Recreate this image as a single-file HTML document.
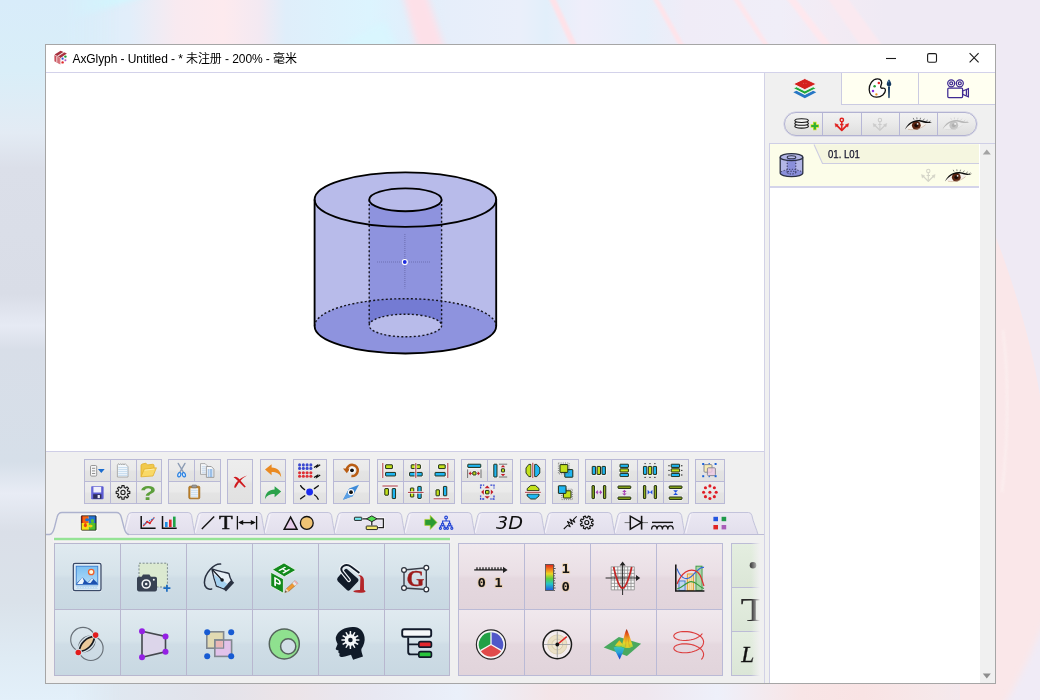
<!DOCTYPE html>
<html lang="zh">
<head>
<meta charset="utf-8">
<title>AxGlyph - Untitled</title>
<style>
*{box-sizing:border-box;margin:0;padding:0}
html,body{width:1040px;height:700px;overflow:hidden}
body{position:relative;font-family:"Liberation Sans","Noto Sans CJK SC",sans-serif;background:#e9e9f3}
.abs{position:absolute}
#bg{position:absolute;left:0;top:0;width:1040px;height:700px}
#win{position:absolute;left:45px;top:44px;width:951px;height:640px;background:#fff;border:1px solid #a6a6a6}
#title{position:absolute;left:0;top:0;width:949px;height:28px;background:#fff;border-bottom:1px solid #d3d2ea}
#title .txt{position:absolute;left:26.5px;top:5.5px;font-size:12px;line-height:16px;color:#000;white-space:nowrap;letter-spacing:-0.08px}
#canvas{position:absolute;left:0;top:28px;width:718px;height:379px;background:#fff;border-bottom:1px solid #cfcee6}
#vsep{position:absolute;left:718px;top:28px;width:1px;height:610px;background:#d2d2e6}
#bottom{position:absolute;left:0;top:407px;width:718px;height:231px;background:#f0f0f0;overflow:hidden}
#right{position:absolute;left:719px;top:28px;width:230px;height:610px;background:#f0f0f0;overflow:hidden}
.grp{position:absolute;top:7px;height:45px;background:#b9b9d6}
.grp b{position:absolute;display:block;background:linear-gradient(#ededed,#eaeaea 46%,#e4e4e4 54%,#e1e1e1)}
.tab{position:absolute;top:60px;height:23px}
.pal{position:absolute;top:91px;height:133px}
.pal b{position:absolute;display:block}
#pblue{left:8px;width:396px;background:#b8b7cf}
#pblue b{background:linear-gradient(#e0eaf0,#d6e3ea 47%,#cfdde6 53%,#c8d8e2)}
#ppink{left:412px;width:265px;background:#babad6}
#ppink b{background:linear-gradient(#f0e8ed,#eadfe5 47%,#e5d8df 53%,#e1d4db)}
#pgreen{left:685px;width:34px;background:#bcbcd6}
#pgreen b{background:linear-gradient(#e4eee0,#dbe6d7)}
#ico{position:absolute;left:0;top:0;width:1040px;height:700px;pointer-events:none}
#rtabs b{position:absolute;display:block;top:0;height:32px;background:#fffff1;border-bottom:1px solid #cbcbe2;border-left:1px solid #cbcbe2}
#pill{position:absolute;left:19px;top:39px;width:193px;height:24px;border:1px solid #b2b2d2;box-shadow:0 0 0 .5px #c9c9e0;border-radius:12px;background:linear-gradient(#f2f2f2,#e9e9e9 50%,#dedede);overflow:hidden}
#pill i{position:absolute;top:0;width:1px;height:22px;background:#b7b7d6}
#list{position:absolute;left:4px;top:70px;width:226px;height:540px;border-top:1px solid #cfcfe6;border-left:1px solid #cfcfe6;background:#fff}
#item{position:absolute;left:0;top:0;width:209px;height:44px;background:#fcfde9;border-bottom:2px solid #d4d4ea}
#item .lbl{position:absolute;left:58px;top:3px;font-size:11px;line-height:14px;color:#12122a;-webkit-text-stroke:.25px #12122a;white-space:nowrap;transform:scaleX(.87);transform-origin:0 0}
#sb{position:absolute;left:210px;top:0;width:16px;height:540px;background:#f0f0f0}
</style>
</head>
<body>
<svg id="bg" viewBox="0 0 1040 700">
<defs>
<linearGradient id="gTop" x1="0" y1="0" x2="1040" y2="0" gradientUnits="userSpaceOnUse">
<stop offset="0" stop-color="#d8ecfa"/><stop offset="0.05" stop-color="#d8eefa"/><stop offset="0.125" stop-color="#e2eefa"/>
<stop offset="0.17" stop-color="#f8eaf0"/><stop offset="0.215" stop-color="#fdeaee"/><stop offset="0.25" stop-color="#f3e9f2"/>
<stop offset="0.275" stop-color="#dfeefa"/><stop offset="0.355" stop-color="#dcf4fe"/><stop offset="0.385" stop-color="#e0f0fc"/>
<stop offset="0.43" stop-color="#e6eefa"/>
<stop offset="0.50" stop-color="#eaeffa"/><stop offset="0.525" stop-color="#e2effa"/><stop offset="0.56" stop-color="#efeefa"/>
<stop offset="0.62" stop-color="#e6effa"/><stop offset="0.66" stop-color="#f0ecf7"/><stop offset="0.75" stop-color="#f0eef8"/>
<stop offset="0.80" stop-color="#f3ebf4"/><stop offset="0.85" stop-color="#efeaf4"/><stop offset="1" stop-color="#efeaf4"/>
</linearGradient>
<linearGradient id="gLeft" x1="0" y1="0" x2="0" y2="700" gradientUnits="userSpaceOnUse">
<stop offset="0" stop-color="#d8ecfa"/><stop offset="0.10" stop-color="#d9eef8"/><stop offset="0.19" stop-color="#e3ebf4"/>
<stop offset="0.24" stop-color="#dbdfe9"/><stop offset="0.42" stop-color="#d9dde7"/><stop offset="0.465" stop-color="#e6eaf4"/>
<stop offset="0.50" stop-color="#d8dee8"/><stop offset="0.66" stop-color="#d6dfe9"/><stop offset="0.705" stop-color="#e8ecf5"/>
<stop offset="0.76" stop-color="#dadfe8"/><stop offset="0.86" stop-color="#dae2ea"/><stop offset="0.94" stop-color="#dfebf4"/><stop offset="1" stop-color="#e3f0fa"/>
</linearGradient>
<linearGradient id="gLeftFade" x1="0" y1="0" x2="1" y2="0"><stop offset="0" stop-color="#fff"/><stop offset="0.55" stop-color="#fff"/><stop offset="1" stop-color="#000"/></linearGradient>
<mask id="mLeft"><rect x="0" y="0" width="120" height="700" fill="url(#gLeftFade)"/></mask>
<linearGradient id="gBot" x1="0" y1="0" x2="1040" y2="0" gradientUnits="userSpaceOnUse">
<stop offset="0" stop-color="#e3f0fa"/><stop offset="0.09" stop-color="#dfe9f2"/><stop offset="0.2" stop-color="#e2e3eb"/>
<stop offset="0.28" stop-color="#ece4e8"/><stop offset="0.36" stop-color="#e8e8f2"/><stop offset="0.44" stop-color="#eaf0fa"/>
<stop offset="0.53" stop-color="#f4e5e8"/><stop offset="0.62" stop-color="#efe7ef"/><stop offset="0.69" stop-color="#eef0fa"/>
<stop offset="0.77" stop-color="#f8e5e6"/><stop offset="0.83" stop-color="#f9e3e4"/><stop offset="0.90" stop-color="#f6e8ea"/>
<stop offset="0.96" stop-color="#f1e9f3"/><stop offset="1" stop-color="#f0eaf6"/>
</linearGradient>
<filter id="bl3" x="-20%" y="-20%" width="140%" height="140%"><feGaussianBlur stdDeviation="3"/></filter><filter id="bl1" x="-20%" y="-20%" width="140%" height="140%"><feGaussianBlur stdDeviation="1.300"/></filter>
</defs>
<rect x="0" y="0" width="1040" height="700" fill="url(#gTop)"/>
<g filter="url(#bl3)"><path d="M20 50 L70 20 L150 -6 L60 -6 L10 30Z" fill="#d0f7fe" opacity=".9"/><path d="M402 -8 L426 -8 L446 52 L418 52Z" fill="#fde0e8"/><path d="M330 52 L385 20 L400 52Z" fill="#d8f6fe" opacity=".8"/></g>
<g stroke-linecap="butt" fill="none" filter="url(#bl1)">
<path d="M551 -4 L575 48" stroke="#fee2e8" stroke-width="6"/>
<path d="M654 -4 L683 48" stroke="#fee4ea" stroke-width="5"/>
<path d="M734 -4 L768 48" stroke="#fee6ec" stroke-width="5"/>
<path d="M789 -4 L829 48" stroke="#fee8ee" stroke-width="7"/>
<path d="M826 -4 L862 48 L884 48 L846 -4Z" fill="#fae9f0" stroke="none"/>
</g>
<rect x="0" y="660" width="1040" height="40" fill="url(#gBot)"/>
<rect x="0" y="0" width="120" height="700" fill="url(#gLeft)" mask="url(#mLeft)"/>
<rect x="960" y="60" width="80" height="640" fill="#efeaf4"/>
<path d="M990 222 C1006 262 1030 330 1041 402 L1041 701 L960 701 L960 222Z" fill="#fae7e9"/>
<path d="M1003 330 C1009 380 1008 440 1002 492" stroke="#fcf0f0" stroke-width="2.500" fill="none" opacity=".8" filter="url(#bl1)"/>
<path d="M1046 618 C1034 648 1020 678 1004 706 L1046 706Z" fill="#f0ebf6" filter="url(#bl3)"/>

</svg>
<div id="win">
  <div id="title">
<svg class="abs" style="left:0;top:0" width="40" height="28" viewBox="46 45 40 28">
<path d="M54.6 54.6 L60.6 50.8 L66.9 53.6 L60.6 58Z" fill="#a8323f"/>
<path d="M57.100 56L63.250 52 64.250 52.450 58.100 56.600Z" fill="#f6eaea"/>
<path d="M54.4 55 L60.4 58.2 L60.4 64.6 L54.4 61.2Z" fill="#c8505c"/>
<path d="M56.3 56.2 L57.4 56.8 L57.4 62.9 L56.3 62.3Z" fill="#f4dede"/>
<path d="M58.6 57.4 L59.5 57.9 L59.5 64 L58.6 63.5Z" fill="#e9a0a4"/>
<path d="M60.8 58.2 L66.9 54.2 L66.9 60.6 L60.8 64.6Z" fill="#fbf6f6"/>
<circle cx="62.6" cy="58.7" r="1.1" fill="#2a55d8"/><circle cx="65.4" cy="56.6" r="1.2" fill="#1fa03a"/>
<circle cx="62.6" cy="62.4" r="1.2" fill="#e02626"/><circle cx="65.4" cy="60.2" r="1" fill="#a855c8"/>
</svg>

    <div class="txt">AxGlyph - Untitled - * 未注册 - 200% - 毫米</div>
<svg class="abs" style="left:820px;top:0" width="129" height="28" viewBox="866 45 129 28" fill="none" stroke="#1a1a1a" stroke-width="1.1">
<path d="M886 58.5 H896"/>
<rect x="927.6" y="53.6" width="8.9" height="8.6" rx="1.5"/>
<path d="M969.6 53.2 L978.6 62.4 M978.6 53.2 L969.6 62.4"/>
</svg>

  </div>
  <div id="canvas">
<svg class="abs" style="left:0;top:0" width="718" height="378" viewBox="46 73 718 378">
<defs><clipPath id="cpBot"><ellipse cx="405.4" cy="326.1" rx="90.8" ry="27.4"/></clipPath></defs>
<path d="M314.6 199.6 A90.8 27.3 0 0 1 496.2 199.6 L496.2 326.1 A90.8 27.4 0 0 1 314.6 326.1Z" fill="#b8bbea"/>
<ellipse cx="405.4" cy="326.1" rx="90.8" ry="27.4" fill="#8e93de"/>
<path id="innerCyl" d="M369.2 199.8 A36.2 11.4 0 0 0 441.6 199.8 L441.6 325.5 A36.2 11.3 0 0 1 369.2 325.5Z" fill="#8e93de"/>
<path d="M369.2 199.8 L441.6 199.8 L441.6 325.5 A36.2 11.3 0 0 1 369.2 325.5Z" fill="#747bd3" clip-path="url(#cpBot)"/>
<ellipse cx="405.4" cy="325.5" rx="36.2" ry="11.3" fill="#b8bbea"/>
<ellipse cx="405.4" cy="199.8" rx="36.2" ry="11.4" fill="#b8bbea"/>
<g fill="none" stroke="#14141c" stroke-width="1.4" stroke-dasharray="2 2.2">
<path d="M314.6 326.1 A90.8 27.4 0 0 1 496.2 326.1"/>
<ellipse cx="405.4" cy="325.5" rx="36.2" ry="11.3"/>
<path d="M369.2 199.8 V325.5 M441.6 199.8 V325.5"/>
</g>
<g fill="none" stroke="#000" stroke-width="1.85">
<path d="M314.6 199.6 L314.6 326.1 A90.8 27.4 0 0 0 496.2 326.1 L496.2 199.6"/>
<ellipse cx="405.4" cy="199.6" rx="90.8" ry="27.3"/>
<ellipse cx="405.4" cy="199.8" rx="36.2" ry="11.4"/>
</g>
<g stroke="#7174b8" stroke-width="1.6" stroke-dasharray="1 1" opacity=".75">
<path d="M377 262 H431 M404.8 234 V288.5"/>
</g>
<circle cx="404.8" cy="262" r="3.1" fill="#fff"/>
<circle cx="404.8" cy="262" r="1.9" fill="#1d2be0"/>
</svg>
  </div>
  <div id="vsep"></div>
  <div id="bottom">
<div class="grp" style="left:38px;width:78px"><b style="left:1px;top:1px;width:25px;height:21px"></b><b style="left:1px;top:23px;width:25px;height:21px"></b><b style="left:27px;top:1px;width:25px;height:21px"></b><b style="left:27px;top:23px;width:25px;height:21px"></b><b style="left:53px;top:1px;width:24px;height:21px"></b><b style="left:53px;top:23px;width:24px;height:21px"></b></div>
<div class="grp" style="left:122px;width:53px"><b style="left:1px;top:1px;width:25px;height:21px"></b><b style="left:27px;top:1px;width:25px;height:21px"></b><b style="left:1px;top:23px;width:51px;height:21px"></b></div>
<div class="grp" style="left:181px;width:26px"><b style="left:1px;top:1px;width:24px;height:43px"></b></div>
<div class="grp" style="left:214px;width:26px"><b style="left:1px;top:1px;width:24px;height:21px"></b><b style="left:1px;top:23px;width:24px;height:21px"></b></div>
<div class="grp" style="left:247px;width:34px"><b style="left:1px;top:1px;width:32px;height:21px"></b><b style="left:1px;top:23px;width:32px;height:21px"></b></div>
<div class="grp" style="left:287px;width:37px"><b style="left:1px;top:1px;width:35px;height:21px"></b><b style="left:1px;top:23px;width:35px;height:21px"></b></div>
<div class="grp" style="left:331px;width:78px"><b style="left:1px;top:1px;width:25px;height:21px"></b><b style="left:1px;top:23px;width:25px;height:21px"></b><b style="left:27px;top:1px;width:25px;height:21px"></b><b style="left:27px;top:23px;width:25px;height:21px"></b><b style="left:53px;top:1px;width:24px;height:21px"></b><b style="left:53px;top:23px;width:24px;height:21px"></b></div>
<div class="grp" style="left:415px;width:52px"><b style="left:1px;top:1px;width:25px;height:21px"></b><b style="left:27px;top:1px;width:24px;height:21px"></b><b style="left:1px;top:23px;width:50px;height:21px"></b></div>
<div class="grp" style="left:474px;width:26px"><b style="left:1px;top:1px;width:24px;height:21px"></b><b style="left:1px;top:23px;width:24px;height:21px"></b></div>
<div class="grp" style="left:506px;width:27px"><b style="left:1px;top:1px;width:25px;height:21px"></b><b style="left:1px;top:23px;width:25px;height:21px"></b></div>
<div class="grp" style="left:539px;width:104px"><b style="left:1px;top:1px;width:25px;height:21px"></b><b style="left:1px;top:23px;width:25px;height:21px"></b><b style="left:27px;top:1px;width:25px;height:21px"></b><b style="left:27px;top:23px;width:25px;height:21px"></b><b style="left:53px;top:1px;width:25px;height:21px"></b><b style="left:53px;top:23px;width:25px;height:21px"></b><b style="left:79px;top:1px;width:24px;height:21px"></b><b style="left:79px;top:23px;width:24px;height:21px"></b></div>
<div class="grp" style="left:649px;width:30px"><b style="left:1px;top:1px;width:28px;height:21px"></b><b style="left:1px;top:23px;width:28px;height:21px"></b></div>
<svg class="abs" style="left:0;top:0" width="718" height="231" viewBox="46 452 718 231">
<defs><linearGradient id="tabg" x1="0" y1="0" x2="0" y2="1"><stop offset="0" stop-color="#ebe8f3"/><stop offset="1" stop-color="#e2dfec"/></linearGradient></defs>
<path d="M613 534.5 C614.6 531.5 616.8000000000001 518.5 617.7 515.7 Q618.6 512.5 621.8000000000001 512.5 H678.2 Q680.9000000000001 512.5 681.6 515.5 C682.6 521.5 683.8 529.5 685 534.5Z" fill="url(#tabg)"/>
<path d="M613 534.5 C614.6 531.5 616.8000000000001 518.5 617.7 515.7 Q618.6 512.5 621.8000000000001 512.5 H678.2 Q680.9000000000001 512.5 681.6 515.5 C682.6 521.5 683.8 529.5 685 534.5" fill="none" stroke="#c3c3db" stroke-width="1"/>
<path d="M615.2 533 L620.2 514.2" fill="none" stroke="#f6f4fa" stroke-width="1.1"/>
<path d="M543 534.5 C544.6 531.5 546.8000000000001 518.5 547.7 515.7 Q548.6 512.5 551.8000000000001 512.5 H608.2 Q610.9000000000001 512.5 611.6 515.5 C612.6 521.5 613.8 529.5 615 534.5Z" fill="url(#tabg)"/>
<path d="M543 534.5 C544.6 531.5 546.8000000000001 518.5 547.7 515.7 Q548.6 512.5 551.8000000000001 512.5 H608.2 Q610.9000000000001 512.5 611.6 515.5 C612.6 521.5 613.8 529.5 615 534.5" fill="none" stroke="#c3c3db" stroke-width="1"/>
<path d="M545.2 533 L550.2 514.2" fill="none" stroke="#f6f4fa" stroke-width="1.1"/>
<path d="M473 534.5 C474.6 531.5 476.8 518.5 477.7 515.7 Q478.59999999999997 512.5 481.8 512.5 H538.2 Q540.9000000000001 512.5 541.6 515.5 C542.6 521.5 543.8 529.5 545 534.5Z" fill="url(#tabg)"/>
<path d="M473 534.5 C474.6 531.5 476.8 518.5 477.7 515.7 Q478.59999999999997 512.5 481.8 512.5 H538.2 Q540.9000000000001 512.5 541.6 515.5 C542.6 521.5 543.8 529.5 545 534.5" fill="none" stroke="#c3c3db" stroke-width="1"/>
<path d="M475.2 533 L480.2 514.2" fill="none" stroke="#f6f4fa" stroke-width="1.1"/>
<path d="M403 534.5 C404.6 531.5 406.8 518.5 407.7 515.7 Q408.59999999999997 512.5 411.8 512.5 H468.2 Q470.9 512.5 471.59999999999997 515.5 C472.59999999999997 521.5 473.8 529.5 475 534.5Z" fill="url(#tabg)"/>
<path d="M403 534.5 C404.6 531.5 406.8 518.5 407.7 515.7 Q408.59999999999997 512.5 411.8 512.5 H468.2 Q470.9 512.5 471.59999999999997 515.5 C472.59999999999997 521.5 473.8 529.5 475 534.5" fill="none" stroke="#c3c3db" stroke-width="1"/>
<path d="M405.2 533 L410.2 514.2" fill="none" stroke="#f6f4fa" stroke-width="1.1"/>
<path d="M333 534.5 C334.6 531.5 336.8 518.5 337.7 515.7 Q338.59999999999997 512.5 341.8 512.5 H398.2 Q400.9 512.5 401.59999999999997 515.5 C402.59999999999997 521.5 403.8 529.5 405 534.5Z" fill="url(#tabg)"/>
<path d="M333 534.5 C334.6 531.5 336.8 518.5 337.7 515.7 Q338.59999999999997 512.5 341.8 512.5 H398.2 Q400.9 512.5 401.59999999999997 515.5 C402.59999999999997 521.5 403.8 529.5 405 534.5" fill="none" stroke="#c3c3db" stroke-width="1"/>
<path d="M335.2 533 L340.2 514.2" fill="none" stroke="#f6f4fa" stroke-width="1.1"/>
<path d="M263 534.5 C264.6 531.5 266.8 518.5 267.7 515.7 Q268.59999999999997 512.5 271.8 512.5 H328.2 Q330.9 512.5 331.59999999999997 515.5 C332.59999999999997 521.5 333.8 529.5 335 534.5Z" fill="url(#tabg)"/>
<path d="M263 534.5 C264.6 531.5 266.8 518.5 267.7 515.7 Q268.59999999999997 512.5 271.8 512.5 H328.2 Q330.9 512.5 331.59999999999997 515.5 C332.59999999999997 521.5 333.8 529.5 335 534.5" fill="none" stroke="#c3c3db" stroke-width="1"/>
<path d="M265.2 533 L270.2 514.2" fill="none" stroke="#f6f4fa" stroke-width="1.1"/>
<path d="M193 534.5 C194.6 531.5 196.79999999999998 518.5 197.7 515.7 Q198.6 512.5 201.79999999999998 512.5 H258.2 Q260.9 512.5 261.59999999999997 515.5 C262.59999999999997 521.5 263.8 529.5 265 534.5Z" fill="url(#tabg)"/>
<path d="M193 534.5 C194.6 531.5 196.79999999999998 518.5 197.7 515.7 Q198.6 512.5 201.79999999999998 512.5 H258.2 Q260.9 512.5 261.59999999999997 515.5 C262.59999999999997 521.5 263.8 529.5 265 534.5" fill="none" stroke="#c3c3db" stroke-width="1"/>
<path d="M195.2 533 L200.2 514.2" fill="none" stroke="#f6f4fa" stroke-width="1.1"/>
<path d="M123 534.5 C124.6 531.5 126.79999999999998 518.5 127.69999999999999 515.7 Q128.6 512.5 131.79999999999998 512.5 H188.2 Q190.89999999999998 512.5 191.6 515.5 C192.6 521.5 193.8 529.5 195 534.5Z" fill="url(#tabg)"/>
<path d="M123 534.5 C124.6 531.5 126.79999999999998 518.5 127.69999999999999 515.7 Q128.6 512.5 131.79999999999998 512.5 H188.2 Q190.89999999999998 512.5 191.6 515.5 C192.6 521.5 193.8 529.5 195 534.5" fill="none" stroke="#c3c3db" stroke-width="1"/>
<path d="M125.2 533 L130.2 514.2" fill="none" stroke="#f6f4fa" stroke-width="1.1"/>
<path d="M683.5 534.5 C685.1 531.5 687.6 518.5 688.5 515.7 Q689.4 512.5 692.6 512.5 H748.5 Q751.2 512.5 751.9 515.5 C752.9 521.5 756.8 529.5 758.0 534.5Z" fill="url(#tabg)"/><path d="M683.5 534.5 C685.1 531.5 687.6 518.5 688.5 515.7 Q689.4 512.5 692.6 512.5 H748.5 Q751.2 512.5 751.9 515.5 C752.9 521.5 756.8 529.5 758.0 534.5" fill="none" stroke="#c3c3db" stroke-width="1"/>
<path d="M685.7 533 L690.7 514.2" fill="none" stroke="#f6f4fa" stroke-width="1.1"/>
<path d="M46 534.500 H764" stroke="#bcbcd6" stroke-width="1.200"/>
<path d="M46 534.5 H49.5 C52.5 534.5 53.6 531 54.6 527 L57 517.5 C57.8 514 58.8 512.5 62 512.5 H116.5 C119.6 512.5 120.5 514 121.4 517.5 L124 527.5 C125 531.5 126 534.5 129 534.5 L129 536 L46 536Z" fill="#f0f0f0"/>
<path d="M46 534.5 H49.5 C52.5 534.5 53.6 531 54.6 527 L57 517.5 C57.8 514 58.8 512.5 62 512.5 H116.5 C119.6 512.5 120.5 514 121.4 517.5 L124 527.5 C125 531.5 126 534.5 129 534.5" fill="none" stroke="#adb2ce" stroke-width="1.350"/>
<path d="M53 536.500 H450.500 V541.800 H53Z" fill="#f7f1f8"/><path d="M54 537.700 H450 V540.300 H54Z" fill="#95e395"/>
</svg>
<div class="pal" id="pblue"><b style="left:1px;top:1px;width:65px;height:65px"></b><b style="left:67px;top:1px;width:65px;height:65px"></b><b style="left:133px;top:1px;width:65px;height:65px"></b><b style="left:199px;top:1px;width:65px;height:65px"></b><b style="left:265px;top:1px;width:65px;height:65px"></b><b style="left:331px;top:1px;width:64px;height:65px"></b><b style="left:1px;top:67px;width:65px;height:65px"></b><b style="left:67px;top:67px;width:65px;height:65px"></b><b style="left:133px;top:67px;width:65px;height:65px"></b><b style="left:199px;top:67px;width:65px;height:65px"></b><b style="left:265px;top:67px;width:65px;height:65px"></b><b style="left:331px;top:67px;width:64px;height:65px"></b></div>
<div class="pal" id="ppink"><b style="left:1px;top:1px;width:65px;height:65px"></b><b style="left:67px;top:1px;width:65px;height:65px"></b><b style="left:133px;top:1px;width:65px;height:65px"></b><b style="left:199px;top:1px;width:65px;height:65px"></b><b style="left:1px;top:67px;width:65px;height:65px"></b><b style="left:67px;top:67px;width:65px;height:65px"></b><b style="left:133px;top:67px;width:65px;height:65px"></b><b style="left:199px;top:67px;width:65px;height:65px"></b></div>
<div class="pal" id="pgreen"><b style="left:1px;top:1px;width:33px;height:43px"></b><b style="left:1px;top:45px;width:33px;height:43px"></b><b style="left:1px;top:89px;width:33px;height:43px"></b></div>
  </div>
  <div id="right">
<div id="rtabs"><b style="left:76px;width:77px"></b><b style="left:153px;width:77px"></b></div>
<div id="pill"><i style="left:37px"></i><i style="left:76px"></i><i style="left:114px"></i><i style="left:152px"></i></div>
<div id="list">
  <div id="item">
    <svg class="abs" style="left:0;top:0" width="209" height="43" viewBox="770 143.500 209 43">
      <defs><pattern id="dots" width="2" height="2" patternUnits="userSpaceOnUse"><rect width="2" height="2" fill="#f8f9e4"/><rect width="1" height="1" fill="#f1f2dc"/><rect x="1" y="1" width="1" height="1" fill="#f1f2dc"/></pattern></defs>
      <path d="M814 144 L822.500 163 H979 V144Z" fill="url(#dots)"/>
      <path d="M814 144 L822.500 163 H979" fill="none" stroke="#cdcde2" stroke-width="1.100"/>
    </svg>
    <div class="lbl">01. L01</div>
  </div>
  <div id="sb"></div>
</div>

  </div>
</div>
<svg id="ico" viewBox="0 0 1040 700">
<g id="tb-menu"><rect x="90.5" y="465.5" width="6.2" height="10.6" rx="1.2" fill="#f6f6f6" stroke="#8c8c8c" stroke-width=".9"/><path d="M92 468.3h3.2M92 470.9h3.2M92 473.5h3.2" stroke="#909090" stroke-width="1"/><path d="M97.9 468.9h6.8l-3.4 4.2z" fill="#1b6ccf"/></g>
<g id="tb-new"><path d="M117.4 465.2l1.1-1.6 1.1 1.4 1.1-1.4 1.1 1.4 1.1-1.4 1.1 1.4 1.1-1.4 1.2 1.2 1.7 1.9V477H117.4Z" fill="#f3f8fc" stroke="#9b9b9b" stroke-width=".8"/><path d="M118.3 467.6h9.8M118.3 469.6h9.8M118.3 471.6h9.8M118.3 473.6h9.8M118.3 475.4h9.8" stroke="#b9d3ea" stroke-width=".8"/></g>
<g id="tb-open"><path d="M141 476.6V465.6q0-1.3 1.3-1.6l3.6-.8 1.6 1.7 5.2-.6q1.2 0 1.3 1.2l.2 3.2" fill="#f1c94c" stroke="#e0ae28" stroke-width=".8"/><path d="M141 476.8l3.2-7.6 12.2-1.4-3.4 8.2Z" fill="#f9d966" stroke="#e2b02c" stroke-width=".8"/><path d="M144.6 470.2l9.5-1.1" stroke="#fdeea8" stroke-width="1"/></g>
<g id="tb-save"><rect x="91" y="486.2" width="12.6" height="13" rx="1.2" fill="#5b5bd2"/><rect x="93.4" y="486.9" width="7.8" height="5.6" fill="#f1f1fb"/><rect x="93.2" y="494.2" width="8.2" height="4.6" fill="#2e2e5e"/><rect x="97.6" y="495" width="2.3" height="3.1" fill="#ececfa"/><path d="M91.8 487v11.4" stroke="#8a8ae6" stroke-width="1"/></g>
<g id="tb-gear" fill="none" stroke="#1c1c1c" stroke-width="1.100" stroke-linejoin="round"><path d="M127.85 491.19 L129.81 491.27 L129.81 493.53 L127.85 493.61 L127.28 494.98 L128.61 496.41 L127.01 498.01 L125.58 496.68 L124.21 497.25 L124.13 499.21 L121.87 499.21 L121.79 497.25 L120.42 496.68 L118.99 498.01 L117.39 496.41 L118.72 494.98 L118.15 493.61 L116.19 493.53 L116.19 491.27 L118.15 491.19 L118.72 489.82 L117.39 488.39 L118.99 486.79 L120.42 488.12 L121.79 487.55 L121.87 485.59 L124.13 485.59 L124.21 487.55 L125.58 488.12 L127.01 486.79 L128.61 488.39 L127.28 489.82Z"/><circle cx="123" cy="492.400" r="2.100"/></g>
<text id="tb-help" x="148.2" y="499.9" font-family="Liberation Sans,sans-serif" font-weight="700" font-size="20.5" fill="#5c9f3b" text-anchor="middle" transform="translate(148.2 0) scale(1.3 1) translate(-148.2 0)">?</text>
<g id="tb-cut"><path d="M178.2 463.4L183.9 473.2M185 463.4L179.3 473.2" stroke="#8c9cb4" stroke-width="1.350" stroke-linecap="round"/><ellipse cx="179.3" cy="474.7" rx="1.450" ry="2.200" fill="#e6f2ff" stroke="#2a82e2" stroke-width="1.250" transform="rotate(18 179.3 474.7)"/><ellipse cx="183.9" cy="474.7" rx="1.450" ry="2.200" fill="#e6f2ff" stroke="#2a82e2" stroke-width="1.250" transform="rotate(-18 183.9 474.7)"/></g>
<g id="tb-copy"><path d="M200.5 463.6h4.6l2.2 2.2v8.6h-6.8z" fill="#f4f6f8" stroke="#9a9a9a" stroke-width=".8"/><path d="M201.8 466.8h4M201.8 468.8h4M201.8 470.8h4M201.8 472.8h4" stroke="#b5cde6" stroke-width=".8"/><path d="M206.4 466.5h4.9l2.6 2.6v8.3h-7.5z" fill="#f6f8fa" stroke="#8a8a8a" stroke-width=".8"/><path d="M207.8 470h4.6M207.8 472h4.6M207.8 474h4.6M207.8 476h4.6" stroke="#2c7ad0" stroke-width=".9" stroke-dasharray="1 .8 3 0"/></g>
<g id="tb-paste"><rect x="188.8" y="486.2" width="11" height="12.6" rx="1.2" fill="#c08328" stroke="#9c651a" stroke-width=".7"/><rect x="190.4" y="488.2" width="7.8" height="9.4" fill="#f0f6fb"/><path d="M190.8 490.4h7M190.8 492.4h7M190.8 494.4h7M190.8 496.2h7" stroke="#c2d8ea" stroke-width=".8"/><rect x="191.8" y="485" width="5" height="2.8" rx="1" fill="#9a9a9a" stroke="#6e6e6e" stroke-width=".6"/></g>
<g id="tb-del" fill="#d01a1e"><path d="M233.500 477.300Q236.200 476 238.700 478.500L245.800 486.700 244.500 487.600 237.200 480.300Q235.200 478.300 233.500 477.300Z"/><path d="M247 475.500Q240.200 479.200 236.600 486.300 235.400 488.400 234.500 487.800 233.600 486.200 236.400 482.500 240.400 477.700 247 475.500Z"/></g>
<path id="tb-undo" d="M265 469.6l6.6-5.4v3.4c5.8.2 9.3 3.4 9.6 9.6-1.8-3.6-4.6-5.2-9.6-5.2v3.2z" fill="#ea8a22"/>
<path id="tb-redo" d="M281.2 491.6l-6.6-5.4v3.4c-5.8.2-9.3 3.4-9.6 9.6 1.8-3.6 4.6-5.2 9.6-5.2v3.2z" fill="#2ba24a"/>
<g id="tb-array"><circle cx="299.60" cy="464.90" r="1.55" fill="#3b49cf"/><circle cx="299.60" cy="472.80" r="1.55" fill="#de2f35"/><circle cx="303.35" cy="464.90" r="1.55" fill="#3b49cf"/><circle cx="303.35" cy="472.80" r="1.55" fill="#de2f35"/><circle cx="307.10" cy="464.90" r="1.55" fill="#3b49cf"/><circle cx="307.10" cy="472.80" r="1.55" fill="#de2f35"/><circle cx="310.85" cy="464.90" r="1.55" fill="#3b49cf"/><circle cx="310.85" cy="472.80" r="1.55" fill="#de2f35"/><circle cx="299.60" cy="468.40" r="1.55" fill="#3b49cf"/><circle cx="299.60" cy="476.30" r="1.55" fill="#de2f35"/><circle cx="303.35" cy="468.40" r="1.55" fill="#3b49cf"/><circle cx="303.35" cy="476.30" r="1.55" fill="#de2f35"/><circle cx="307.10" cy="468.40" r="1.55" fill="#3b49cf"/><circle cx="307.10" cy="476.30" r="1.55" fill="#de2f35"/><circle cx="310.85" cy="468.40" r="1.55" fill="#3b49cf"/><circle cx="310.85" cy="476.30" r="1.55" fill="#de2f35"/><path d="M314 467.4l3.4-2.2-.6 1.8 3.4-2.2M314 477.6l3.4-2.2-.6 1.8 3.4-2.2" fill="none" stroke="#111" stroke-width="1.2"/></g>
<g id="tb-explode"><path d="M300.6 485.6Q302 488.2 304.6 489.6M318.4 485.8L314.4 488.6M300.6 498.8L304.8 495.8M318.2 499.2Q317 496.4 314.6 495" fill="none" stroke="#111" stroke-width="1.35" stroke-linecap="round"/><circle cx="309.6" cy="492" r="3.4" fill="#1d2df0"/></g>
<g id="tb-rot"><path d="M346.6 469.6A5.6 5.6 0 1 1 351.4 476" fill="none" stroke="#b95d14" stroke-width="2.5"/><path d="M343 468.4h7.2l-3.4 4.8z" fill="#b95d14"/><circle cx="352" cy="470.3" r="3" fill="#fff"/><circle cx="352" cy="470.3" r="1.9" fill="#111"/></g>
<g id="tb-compass"><path d="M343 499.8L349.2 488.4 359 484.8 352.6 496.2Z" fill="#3d8ad8"/><path d="M343 499.8L349.2 488.4 352.6 496.2Z" fill="#5a9fe4"/><circle cx="351" cy="492.2" r="3.1" fill="#fff"/><circle cx="351" cy="492.2" r="1.9" fill="#111"/></g>
<g id="tb-al"><path d="M382.8 463V478" stroke="#fff" stroke-width="2.6" opacity=".8"/><path d="M382.8 463V478" stroke="#b0404a" stroke-width="1.1"/><rect x="384.6" y="463.8" width="8.8" height="5.8" rx="1.5" fill="#fff" opacity=".9"/><rect x="385.6" y="464.8" width="6.8" height="3.8" rx="0.35" fill="#c3e11c" stroke="#1c2a14" stroke-width="1"/><rect x="384.6" y="471.4" width="12.0" height="5.6" rx="1.5" fill="#fff" opacity=".9"/><rect x="385.6" y="472.4" width="10.0" height="3.6" rx="0.35" fill="#1fb6f2" stroke="#1c2a14" stroke-width="1"/></g>
<g id="tb-ac"><rect x="410.2" y="463.8" width="11.2" height="5.8" rx="1.5" fill="#fff" opacity=".9"/><rect x="411.2" y="464.8" width="9.2" height="3.8" rx="0.35" fill="#c3e11c" stroke="#1c2a14" stroke-width="1"/><rect x="408.6" y="471.4" width="14.6" height="5.6" rx="1.5" fill="#fff" opacity=".9"/><rect x="409.6" y="472.4" width="12.6" height="3.6" rx="0.35" fill="#1fb6f2" stroke="#1c2a14" stroke-width="1"/><path d="M415.8 463V478" stroke="#fff" stroke-width="2.6" opacity=".8"/><path d="M415.8 463V478" stroke="#b0404a" stroke-width="1.1"/></g>
<g id="tb-ar"><path d="M447.8 463V478" stroke="#fff" stroke-width="2.6" opacity=".8"/><path d="M447.8 463V478" stroke="#b0404a" stroke-width="1.1"/><rect x="437.6" y="463.8" width="8.6" height="5.8" rx="1.5" fill="#fff" opacity=".9"/><rect x="438.6" y="464.8" width="6.6" height="3.8" rx="0.35" fill="#c3e11c" stroke="#1c2a14" stroke-width="1"/><rect x="434.0" y="471.4" width="12.2" height="5.6" rx="1.5" fill="#fff" opacity=".9"/><rect x="435.0" y="472.4" width="10.2" height="3.6" rx="0.35" fill="#1fb6f2" stroke="#1c2a14" stroke-width="1"/></g>
<g id="tb-at"><path d="M382.4 486H397.8" stroke="#fff" stroke-width="2.6" opacity=".8"/><path d="M382.4 486H397.8" stroke="#b0404a" stroke-width="1.1"/><rect x="383.8" y="487.6" width="5.6" height="8.6" rx="1.5" fill="#fff" opacity=".9"/><rect x="384.8" y="488.6" width="3.6" height="6.6" rx="0.35" fill="#c3e11c" stroke="#1c2a14" stroke-width="1"/><rect x="391.2" y="487.6" width="5.4" height="12.0" rx="1.5" fill="#fff" opacity=".9"/><rect x="392.2" y="488.6" width="3.4" height="10.0" rx="0.35" fill="#1fb6f2" stroke="#1c2a14" stroke-width="1"/></g>
<g id="tb-am"><rect x="409.4" y="487.0" width="5.4" height="11.0" rx="1.5" fill="#fff" opacity=".9"/><rect x="410.4" y="488.0" width="3.4" height="9.0" rx="0.35" fill="#c3e11c" stroke="#1c2a14" stroke-width="1"/><rect x="416.8" y="485.4" width="5.4" height="14.0" rx="1.5" fill="#fff" opacity=".9"/><rect x="417.8" y="486.4" width="3.4" height="12.0" rx="0.35" fill="#1fb6f2" stroke="#1c2a14" stroke-width="1"/><path d="M408 492.4H423.6" stroke="#fff" stroke-width="2.6" opacity=".8"/><path d="M408 492.4H423.6" stroke="#b0404a" stroke-width="1.1"/></g>
<g id="tb-ab"><path d="M433.6 498.8H449" stroke="#fff" stroke-width="2.6" opacity=".8"/><path d="M433.6 498.8H449" stroke="#b0404a" stroke-width="1.1"/><rect x="435.0" y="488.8" width="5.4" height="8.0" rx="1.5" fill="#fff" opacity=".9"/><rect x="436.0" y="489.8" width="3.4" height="6.0" rx="0.35" fill="#c3e11c" stroke="#1c2a14" stroke-width="1"/><rect x="442.4" y="485.4" width="5.4" height="11.4" rx="1.5" fill="#fff" opacity=".9"/><rect x="443.4" y="486.4" width="3.4" height="9.4" rx="0.35" fill="#1fb6f2" stroke="#1c2a14" stroke-width="1"/></g>
<g id="tb-sw"><rect x="466.8" y="463.2" width="15.0" height="5.2" rx="1.5" fill="#fff" opacity=".9"/><rect x="467.8" y="464.2" width="13.0" height="3.2" rx="0.35" fill="#1fb6f2" stroke="#1c2a14" stroke-width="1"/><path d="M467.6 469.4v8.6M481 469.4v8.6" stroke="#555" stroke-width=".8"/><rect x="471.8" y="470.8" width="5.2" height="5.2" rx="1.5" fill="#fff" opacity=".9"/><rect x="472.8" y="471.8" width="3.2" height="3.2" rx="0.35" fill="#c3e11c" stroke="#1c2a14" stroke-width="1"/><path d="M468.6 473.4l2.2 -2.2v4.4z" fill="#c41d2a"/><path d="M480 473.4l-2.2 -2.2v4.4z" fill="#c41d2a"/><path d="M470 473.4h2M477 473.4h2" stroke="#c41d2a" stroke-width="1"/></g>
<g id="tb-sh"><rect x="492.8" y="463.2" width="5.2" height="14.8" rx="1.5" fill="#fff" opacity=".9"/><rect x="493.8" y="464.2" width="3.2" height="12.8" rx="0.35" fill="#1fb6f2" stroke="#1c2a14" stroke-width="1"/><path d="M499 464.2h8.2M499 477h8.2" stroke="#555" stroke-width=".8"/><rect x="500.4" y="467.8" width="5.2" height="5.2" rx="1.5" fill="#fff" opacity=".9"/><rect x="501.4" y="468.8" width="3.2" height="3.2" rx="0.35" fill="#c3e11c" stroke="#1c2a14" stroke-width="1"/><path d="M503 465l-2.2 2.2h4.4z" fill="#c41d2a"/><path d="M503 476.2l-2.2 -2.2h4.4z" fill="#c41d2a"/></g>
<g id="tb-ss"><path d="M480.6 488.6v-3.4h3.6M490.4 485.2h3.6v3.4M494 495.6v3.4h-3.6M484.2 499h-3.6v-3.4" fill="none" stroke="#2d3fd0" stroke-width="1.3" stroke-dasharray="2 .9"/><rect x="484.5" y="489.4" width="5.5" height="5.5" rx="1.5" fill="#fff" opacity=".9"/><rect x="485.5" y="490.4" width="3.5" height="3.5" rx="0.35" fill="#c3e11c" stroke="#1c2a14" stroke-width="1"/><path d="M481.2 492.1l2.6 -2.6v5.2z" fill="#c41d2a"/><path d="M493.4 492.1l-2.6 -2.6v5.2z" fill="#c41d2a"/><path d="M487.2 485.6l-2.6 2.6h5.2z" fill="#c41d2a"/><path d="M487.2 498.8l-2.6 -2.6h5.2z" fill="#c41d2a"/></g>
<g id="tb-fh"><path d="M531 464.4h-2.2l-2.8 3.6v5l2.8 3.6h2.2z" fill="#c3e11c" stroke="#1c2a14" stroke-width=".9" stroke-linejoin="round"/><path d="M534.6 464.4h2.2l3 3.6v5l-3 3.6h-2.2z" fill="#1fb6f2" stroke="#1c2a14" stroke-width=".9" stroke-linejoin="round"/><path d="M532.8 462.8V478" stroke="#fff" stroke-width="2.6" opacity=".8"/><path d="M532.8 462.8V478" stroke="#b0404a" stroke-width="1.1"/></g>
<g id="tb-fv"><path d="M527.2 490.6v-2l3.6-3.2h4.6l3.6 3.2v2z" fill="#c3e11c" stroke="#1c2a14" stroke-width=".9" stroke-linejoin="round"/><path d="M527.2 494v2l3.6 3h4.6l3.6-3v-2z" fill="#1fb6f2" stroke="#1c2a14" stroke-width=".9" stroke-linejoin="round"/><path d="M525 492.3H540.8" stroke="#fff" stroke-width="2.6" opacity=".8"/><path d="M525 492.3H540.8" stroke="#b0404a" stroke-width="1.1"/></g>
<g id="tb-front"><rect x="564.8" y="469.6" width="8.0" height="7.6" rx="0.35" fill="#1fb6f2" stroke="#1c2a14" stroke-width="1"/><rect x="558.4" y="463" width="10.8" height="10.8" fill="none" stroke="#666" stroke-width=".8" stroke-dasharray="1 1.2"/><rect x="560.0" y="464.6" width="7.8" height="7.8" rx="0.35" fill="#c3e11c" stroke="#1c2a14" stroke-width="1"/></g>
<g id="tb-back"><rect x="561.8" y="489.2" width="10.6" height="10.4" fill="none" stroke="#666" stroke-width=".8" stroke-dasharray="1 1.2"/><rect x="563.4" y="490.8" width="7.6" height="7.2" rx="0.35" fill="#c3e11c" stroke="#1c2a14" stroke-width="1"/><rect x="558.4" y="485.8" width="7.6" height="7.6" rx="0.35" fill="#1fb6f2" stroke="#1c2a14" stroke-width="1"/></g>
<g id="tb-dh"><rect x="591.2" y="465.4" width="15.4" height="10" rx="1.5" fill="#fff" opacity=".9"/><rect x="592.2" y="466.4" width="3.4" height="8" rx=".3" fill="#1fb6f2" stroke="#1c2a14" stroke-width="1"/><rect x="597.1" y="466.4" width="3.4" height="8" rx=".3" fill="#c3e11c" stroke="#1c2a14" stroke-width="1"/><rect x="602.0" y="466.4" width="3.4" height="8" rx=".3" fill="#1fb6f2" stroke="#1c2a14" stroke-width="1"/></g>
<g id="tb-dv"><rect x="619.0" y="463.2" width="10.4" height="14.6" rx="1.5" fill="#fff" opacity=".9"/><rect x="620.0" y="464.2" width="8.4" height="3.2" rx=".3" fill="#1fb6f2" stroke="#1c2a14" stroke-width="1"/><rect x="620.0" y="468.8" width="8.4" height="3.2" rx=".3" fill="#c3e11c" stroke="#1c2a14" stroke-width="1"/><rect x="620.0" y="473.4" width="8.4" height="3.2" rx=".3" fill="#1fb6f2" stroke="#1c2a14" stroke-width="1"/></g>
<g id="tb-dh2"><rect x="642.4" y="465.4" width="15.4" height="10" rx="1.5" fill="#fff" opacity=".9"/><rect x="643.4" y="466.4" width="3.4" height="8" rx=".3" fill="#1fb6f2" stroke="#1c2a14" stroke-width="1"/><circle cx="645.1" cy="463.6" r=".7" fill="#222"/><circle cx="645.1" cy="477.4" r=".7" fill="#222"/><rect x="648.3" y="466.4" width="3.4" height="8" rx=".3" fill="#c3e11c" stroke="#1c2a14" stroke-width="1"/><circle cx="650.0" cy="463.6" r=".7" fill="#222"/><circle cx="650.0" cy="477.4" r=".7" fill="#222"/><rect x="653.2" y="466.4" width="3.4" height="8" rx=".3" fill="#1fb6f2" stroke="#1c2a14" stroke-width="1"/><circle cx="654.9" cy="463.6" r=".7" fill="#222"/><circle cx="654.9" cy="477.4" r=".7" fill="#222"/></g>
<g id="tb-dv2"><rect x="670.2" y="463.2" width="10.4" height="14.6" rx="1.5" fill="#fff" opacity=".9"/><rect x="671.2" y="464.2" width="8.4" height="3.2" rx=".3" fill="#1fb6f2" stroke="#1c2a14" stroke-width="1"/><circle cx="669.0" cy="465.8" r=".7" fill="#222"/><circle cx="681.8" cy="465.8" r=".7" fill="#222"/><rect x="671.2" y="468.8" width="8.4" height="3.2" rx=".3" fill="#c3e11c" stroke="#1c2a14" stroke-width="1"/><circle cx="669.0" cy="470.4" r=".7" fill="#222"/><circle cx="681.8" cy="470.4" r=".7" fill="#222"/><rect x="671.2" y="473.4" width="8.4" height="3.2" rx=".3" fill="#1fb6f2" stroke="#1c2a14" stroke-width="1"/><circle cx="669.0" cy="475.0" r=".7" fill="#222"/><circle cx="681.8" cy="475.0" r=".7" fill="#222"/></g>
<g id="tb-sp1"><rect x="590.8000000000001" y="484.6" width="4.8" height="15" rx="1.5" fill="#fff" opacity=".85"/><rect x="602.2" y="484.6" width="4.8" height="15" rx="1.5" fill="#fff" opacity=".85"/><rect x="592.0" y="485.6" width="2.4" height="13" rx=".4" fill="#8fae1e" stroke="#18240e" stroke-width="1"/><rect x="603.4" y="485.6" width="2.4" height="13" rx=".4" fill="#8fae1e" stroke="#18240e" stroke-width="1"/><path d="M595.6 492.2l2.2 -2.2v4.4z" fill="#a63cb4"/><path d="M602.2 492.2l-2.2 -2.2v4.4z" fill="#a63cb4"/><path d="M597.6 492.2h2.6" stroke="#a63cb4" stroke-width="1" stroke-dasharray=".8 .6"/></g>
<g id="tb-sp2"><rect x="617" y="484.8" width="14.799999999999955" height="4.8" rx="1.5" fill="#fff" opacity=".85"/><rect x="617" y="495.8" width="14.799999999999955" height="4.8" rx="1.5" fill="#fff" opacity=".85"/><rect x="618" y="486" width="12.799999999999955" height="2.4" rx=".4" fill="#8fae1e" stroke="#18240e" stroke-width="1"/><rect x="618" y="497" width="12.799999999999955" height="2.4" rx=".4" fill="#8fae1e" stroke="#18240e" stroke-width="1"/><path d="M624.4 489.8l-2.2 2.2h4.4z" fill="#a63cb4"/><path d="M624.4 495.6l-2.2 -2.2h4.4z" fill="#a63cb4"/><path d="M624.4 491.8v1.8" stroke="#a63cb4" stroke-width="1"/></g>
<g id="tb-sp3"><rect x="642.2" y="484.6" width="4.8" height="15" rx="1.5" fill="#fff" opacity=".85"/><rect x="653.0" y="484.6" width="4.8" height="15" rx="1.5" fill="#fff" opacity=".85"/><rect x="643.4" y="485.6" width="2.4" height="13" rx=".4" fill="#8fae1e" stroke="#18240e" stroke-width="1"/><rect x="654.1999999999999" y="485.6" width="2.4" height="13" rx=".4" fill="#8fae1e" stroke="#18240e" stroke-width="1"/><path d="M650 492.2l-2.4 -2.4v4.8z" fill="#1f4fe0"/><path d="M650 492.2l2.4 -2.4v4.8z" fill="#1f4fe0"/></g>
<g id="tb-sp4"><rect x="668.2" y="484.8" width="14.799999999999955" height="4.8" rx="1.5" fill="#fff" opacity=".85"/><rect x="668.2" y="495.8" width="14.799999999999955" height="4.8" rx="1.5" fill="#fff" opacity=".85"/><rect x="669.2" y="486" width="12.799999999999955" height="2.4" rx=".4" fill="#8fae1e" stroke="#18240e" stroke-width="1"/><rect x="669.2" y="497" width="12.799999999999955" height="2.4" rx=".4" fill="#8fae1e" stroke="#18240e" stroke-width="1"/><path d="M675.6 492.7l-2.4 -2.4h4.8z" fill="#1f4fe0"/><path d="M675.6 492.7l-2.4 2.4h4.8z" fill="#1f4fe0"/></g>
<g id="tb-group"><rect x="704" y="464.6" width="8" height="7.6" rx="1" fill="#f6ecb4" stroke="#8a8a96" stroke-width="1"/><rect x="707.4" y="467.8" width="8" height="7.8" rx="1" fill="#eec8e4" fill-opacity=".8" stroke="#8a8a96" stroke-width="1"/><g fill="#1a62d8"><rect x="702.2" y="463" width="2" height="2"/><rect x="714.6" y="463" width="2" height="2"/><rect x="702.2" y="475.2" width="2" height="2"/><rect x="714.6" y="475.2" width="2" height="2"/><rect x="708.6" y="463" width="1.2" height="1.2"/><rect x="708.6" y="476" width="1.2" height="1.2"/></g></g>
<g id="tb-circ" fill="#e01c24"><circle cx="716.20" cy="492.20" r="1.55"/><circle cx="714.35" cy="496.65" r="1.55"/><circle cx="709.90" cy="498.50" r="1.55"/><circle cx="705.45" cy="496.65" r="1.55"/><circle cx="703.60" cy="492.20" r="1.55"/><circle cx="705.45" cy="487.75" r="1.55"/><circle cx="709.90" cy="485.90" r="1.55"/><circle cx="714.35" cy="487.75" r="1.55"/><circle cx="709.9" cy="492.2" r="1.55"/></g>
<g id="tab-puzzle"><rect x="79.900" y="514.400" width="17.600" height="17.200" rx="1" fill="#fff" opacity=".92"/>
<rect x="81.300" y="515.800" width="7.400" height="7.200" fill="#f8620f"/><rect x="88.700" y="515.800" width="7.400" height="7.200" fill="#2272d2"/><rect x="81.300" y="523" width="7.400" height="7.200" fill="#f8e012"/><rect x="88.700" y="523" width="7.400" height="7.200" fill="#52c030"/>
<path d="M81.300 515.800h1.300v7.200h-1.300z" fill="#b81c10"/><path d="M94.900 515.800h1.200v7.200h-1.200z" fill="#164a9c"/><path d="M94.900 523h1.200v7.200h-1.200z" fill="#3c9a24"/>
<rect x="88" y="518.900" width="1.400" height="1.600" fill="#2272d2"/><ellipse cx="87" cy="519.700" rx="1.900" ry="1.500" fill="#2272d2"/>
<rect x="91.600" y="522.200" width="1.600" height="1.400" fill="#52c030"/><ellipse cx="92.400" cy="521" rx="1.700" ry="1.900" fill="#52c030"/>
<rect x="88" y="525.300" width="1.400" height="1.600" fill="#f8e012"/><ellipse cx="90.600" cy="526.100" rx="2" ry="1.400" fill="#f4d010"/>
<rect x="84.700" y="522.400" width="1.500" height="1.400" fill="#f8620f"/><ellipse cx="85.400" cy="525.200" rx="1.500" ry="2" fill="#ea4410"/>
<rect x="81.300" y="515.800" width="14.800" height="14.400" rx=".8" fill="none" stroke="#1a1a1a" stroke-width=".9" opacity=".85"/></g>
<g id="tab-chart1"><path d="M141.200 516v12.200h14.400" fill="none" stroke="#111" stroke-width="1.500"/><path d="M143.200 526l4-4.200 2.600 1.400 4.600-5.800" fill="none" stroke="#e02020" stroke-width="1.100"/><path d="M143.400 524.400l10.800-6.400" fill="none" stroke="#2090e0" stroke-width="1.300" stroke-dasharray="1.200 1"/><circle cx="147.200" cy="521.800" r="1" fill="#e02020"/><circle cx="149.800" cy="523.200" r="1" fill="#e02020"/></g>
<g id="tab-chart2"><path d="M162.500 516v12.200h14.200" fill="none" stroke="#111" stroke-width="1.500"/><rect x="165" y="522" width="2.600" height="5" fill="#1c8ee0"/><rect x="169" y="519.600" width="2.600" height="7.400" fill="#e02626"/><rect x="173" y="516.600" width="2.600" height="10.400" fill="#1fa347"/></g>
<path id="tab-line" d="M201.800 528.900L214.200 516.400" stroke="#111" stroke-width="1.400"/>
<text id="tab-T" x="225.900" y="529" font-family="Liberation Serif,serif" font-weight="400" font-size="19.600" text-anchor="middle" fill="#111" stroke="#111" stroke-width=".55" transform="translate(225.900 0) scale(1.140 1) translate(-225.900 0)">T</text>
<g id="tab-dim" stroke="#111" fill="#111"><path d="M237.400 516v13.400M256.600 516v13.400" stroke-width="1.300" fill="none"/><path d="M240 522.600h14" stroke-width="1.300"/><path d="M238.200 522.600l5-2.500v5zM255.800 522.600l-5-2.500v5z" stroke="none"/></g>
<path id="tab-tri" d="M290.600 517.200L297 529.200H284.200Z" fill="#e6cdea" stroke="#111" stroke-width="1.500" stroke-linejoin="miter"/>
<circle id="tab-circ" cx="306.800" cy="522.900" r="6.400" fill="#f0c474" stroke="#111" stroke-width="1.300"/>
<g id="tab-flow"><path d="M362 518.800h5M376.800 518.800h6.600v8.800h-5.800M371.800 521.600v4.400" fill="none" stroke="#fff" stroke-width="3" opacity=".8"/><path d="M362 518.800h5M376.800 518.800h6.600v8.800h-5.800M371.800 521.600v4.400" fill="none" stroke="#222" stroke-width="1.300"/>
<rect x="353.600" y="516.400" width="9" height="4.800" rx="1" fill="#fff" opacity=".8"/><rect x="354.400" y="517.200" width="7.400" height="3.200" rx=".5" fill="#72e8f0" stroke="#222" stroke-width="1"/>
<path d="M366.600 518.800l5.200-2.900 5.200 2.900-5.200 2.900z" fill="#52e052" stroke="#222" stroke-width="1"/>
<rect x="365.400" y="525.200" width="12.800" height="5.200" rx="1" fill="#fff" opacity=".8"/><rect x="366.200" y="526" width="11.200" height="3.600" rx=".5" fill="#f4ea70" stroke="#222" stroke-width="1"/></g>
<path id="tab-arrow" d="M424.800 519.400h5.400v-4l6.800 7-6.800 7v-4h-5.400z" fill="#2a9a32" stroke="#b8d428" stroke-width=".700" stroke-linejoin="round"/>
<g id="tab-org" fill="none" stroke="#2446d6" stroke-width="1.150"><circle cx="446.100" cy="517.400" r="1.350"/><path d="M446.100 518.800v2.200M442.600 523.200v-2.200h7v2.200"/><circle cx="442.600" cy="524.200" r="1.150"/><circle cx="449.600" cy="524.200" r="1.150"/><path d="M440.400 527.200v-1.400h4.400v1.400M447.400 527.200v-1.400h4.400v1.400M442.600 525.400v.4M449.600 525.400v.4"/><circle cx="440.400" cy="528.300" r="1.050"/><circle cx="444.800" cy="528.300" r="1.050"/><circle cx="447.400" cy="528.300" r="1.050"/><circle cx="451.800" cy="528.300" r="1.050"/></g>
<text id="tab-3d" x="509.600" y="529.400" font-family="DejaVu Sans,Liberation Sans,sans-serif" font-style="italic" font-size="17.500" text-anchor="middle" fill="#111" transform="translate(509.600 0) scale(1.100 1) translate(-509.600 0)">3D</text>
<path id="tab-res" d="M563.8 529.0 L567.5 525.4 L570.2 526.7 L567.5 521.5 L572.6 524.3 L569.9 519.1 L574.8 522.2 L573.4 519.6 L576.7 516.4" fill="none" stroke="#111" stroke-width="1.050" stroke-linejoin="round"/>
<g id="tab-gear" fill="none" stroke="#111" stroke-width="1.150" stroke-linejoin="round"><path d="M591.55 523.21 L593.23 523.99 L592.40 525.99 L590.66 525.35 L589.65 526.36 L590.29 528.10 L588.29 528.93 L587.51 527.25 L586.09 527.25 L585.31 528.93 L583.31 528.10 L583.95 526.36 L582.94 525.35 L581.20 525.99 L580.37 523.99 L582.05 523.21 L582.05 521.79 L580.37 521.01 L581.20 519.01 L582.94 519.65 L583.95 518.64 L583.31 516.90 L585.31 516.07 L586.09 517.75 L587.51 517.75 L588.29 516.07 L590.29 516.90 L589.65 518.64 L590.66 519.65 L592.40 519.01 L593.23 521.01 L591.55 521.79Z"/><circle cx="586.800" cy="522.500" r="2"/></g>
<g id="tab-diode" fill="none" stroke="#111"><path d="M624.600 522.600H648" stroke-width=".8" stroke="#555"/><path d="M630.300 516.200V529.200L641.400 522.600Z" stroke-width="1.500" fill="#e8e5f0"/><path d="M641.600 515.800V529.600" stroke-width="1.600"/></g>
<g id="tab-ind" fill="none" stroke="#111"><path d="M652 522.400H673" stroke-width="1.400"/><path d="M651.600 529.400q0-3.600 2.700-3.600t2.700 3.600q0-3.600 2.700-3.600t2.700 3.600q0-3.600 2.700-3.600t2.700 3.600q0-3.600 2.700-3.600t2.700 3.600" stroke-width="1.300"/></g>
<g id="tab-sq"><rect x="713.400" y="516.800" width="4.600" height="4.400" fill="#2456e0"/><rect x="721.600" y="516.800" width="4.600" height="4.400" fill="#1f9a4a"/><rect x="713.400" y="525" width="4.600" height="4.400" fill="#e02424"/><rect x="721.600" y="525" width="4.600" height="4.400" fill="#a95cb8"/></g>
<g id="pb-image"><defs><linearGradient id="sky" x1="0" y1="0" x2="0" y2="1"><stop offset="0" stop-color="#7cc0f2"/><stop offset="1" stop-color="#b4dcf8"/></linearGradient></defs>
<rect x="72.300" y="562.300" width="29.700" height="29.400" rx="2" fill="#f4f8fb" opacity=".85"/>
<rect x="73.300" y="563.300" width="27.700" height="27.400" rx="1.600" fill="#dce9f4" stroke="#3a4a68" stroke-width="1.300"/>
<rect x="76.200" y="566.200" width="21.600" height="18.700" fill="url(#sky)" stroke="#2a72ca" stroke-width=".8"/>
<path d="M76.600 584.600v-1.400l5.800-6 3.600 3.800 1.600 1.600 4.600-4.600 5.200 5v1.600z" fill="#1c50b0"/>
<path d="M82.400 577.200l-5.400 6.800h5.600l1.400-3z" fill="#eef6fc"/><path d="M92.200 578l-4.400 5h2.800l2.600-3.400z" fill="#dcecf8"/>
<circle cx="91.200" cy="572" r="2.700" fill="#fffbe0" stroke="#f0602c" stroke-width="1.300"/>
<rect x="76.200" y="585.600" width="21.600" height="3.200" fill="#bad8f0"/><path d="M76 587.600h22" stroke="#e8f2fa" stroke-width=".8" stroke-dasharray="1.200 1.400"/></g>
<g id="pb-shot"><rect x="139" y="563.200" width="28.400" height="23.800" fill="#dbe9d0" stroke="#7c8a8c" stroke-width="1" stroke-dasharray="2 1.600"/>
<path d="M137 578.600q0-1.800 1.800-1.800h2.800l1.400-2.400h6.400l1.400 2.400h4.400q1.800 0 1.800 1.800v11q0 1.800-1.800 1.800h-16.400q-1.800 0-1.800-1.800z" fill="#384253"/>
<circle cx="146.200" cy="584" r="4" fill="#384253" stroke="#f4f6f8" stroke-width="1.600"/><circle cx="146.200" cy="584" r="1.300" fill="#f4f6f8"/><circle cx="153.800" cy="579.800" r="1" fill="#f4f6f8"/>
<path d="M163.400 588.200h7M166.900 584.700v7" stroke="#1c6cc0" stroke-width="1.700"/></g>
<g id="pb-pen"><path d="M220.600 564.100C214 563.600 204.600 573 204.400 582.600c-.1 4.800 3.200 7.300 7.300 6.300" fill="none" stroke="#283040" stroke-width="1.500" stroke-linecap="round"/>
<path d="M211.900 568.900C216 570.200 219 571 222.400 571.900C225.500 572.700 227.500 572.800 229 573.700C229.600 576.500 230 578.500 231.600 580.500L223.800 588.900C221.500 587.500 219.400 587.200 216.400 586C215.800 583 214.800 580.500 214 578.200C213.200 575 212.500 572 211.900 568.900Z" fill="#e6eff6" stroke="#283040" stroke-width="1.400" stroke-linejoin="round"/>
<path d="M213.700 574.600L222.100 580L227.600 584.200L223.700 588.200L216.900 585.600Z" fill="#a4d1f0"/>
<path d="M212.600 569.900L222.100 580" stroke="#10141c" stroke-width="1.300"/><circle cx="222.100" cy="580" r="1.750" fill="#10141c"/>
<path d="M231.700 580.200L234.200 582.700L226 591.500L223.400 589Z" fill="#2a3242"/></g>
<g id="pb-cube"><path d="M272.400 569.600L284 562.900 295.900 570.100 284.300 576.800z" fill="#128a1c" stroke="#f2f8f4" stroke-width=".8"/><path d="M270.800 572.200L283.400 578.900V593.200L270.800 586.200z" fill="#128a1c" stroke="#f2f8f4" stroke-width=".8"/>
<text x="0" y="0" font-family="Liberation Sans,sans-serif" font-weight="700" font-size="11" fill="#fff" text-anchor="middle" transform="matrix(.82 .47 -.86 .49 280.900 571.800)">H</text>
<text x="0" y="0" font-family="Liberation Sans,sans-serif" font-weight="700" font-size="12.500" fill="#fff" text-anchor="middle" transform="matrix(.92 .49 0 1 277.300 587)">P</text>
<path d="M284.900 592.600l1.500-3.900 8.700-8 2.700 2.700-8.900 7.800z" fill="#f09a32" stroke="#8a5a2a" stroke-width=".5"/><path d="M284.900 592.600l1.500-3.900 2.500 2.500z" fill="#f4dcc0"/><path d="M284.900 592.600l.8-1.900 1.100 1.100z" fill="#222"/><path d="M292.300 583.300l2.800-2.600 2.700 2.700-2.900 2.500z" fill="#e8e8ec"/><path d="M294.200 581.500l.9-.8 2.700 2.700-1 .8z" fill="#f0a0aa"/></g>
<g id="pb-bucket"><path d="M358.400 575.400q2.600-.4 4 1t1.500 3.400l.1 10.200q1.700.5 1.600 1.500-.5 1.300-6.300 1.300t-6-1.700q2.600-1.400 6.700-1.200l.4-12.400q-.3-1.600-2-1.800z" fill="#b4262a"/>
<path d="M337.800 577.600L345 569.300q1.100-1 2.200 0L358 578.800q1.100 1.300 0 2.600L349.900 590q-1.500 1.300-3 0L337.800 581.200q-1.500-1.800 0-3.600z" fill="#111b29"/>
<path d="M348.800 580L342.200 571.800q-2.300-3.400 1.200-5.800 3.800-2.200 7.400.6L358.800 572.400" fill="none" stroke="#f2f5f8" stroke-width="4.200" stroke-linecap="round"/>
<path d="M348.800 580L342.200 571.800q-2.300-3.400 1.200-5.800 3.800-2.200 7.400.6L358.800 572.400" fill="none" stroke="#111b29" stroke-width="1.900" stroke-linecap="round"/></g>
<g id="pb-text"><path d="M404 570L426.300 567.800V589.400L404 588Z" fill="none" stroke="#3a3f4a" stroke-width="1.400"/>
<text x="415.400" y="586.200" font-family="Liberation Serif,serif" font-weight="700" font-size="23" fill="#9c1a1a" stroke="#9c1a1a" stroke-width=".35" text-anchor="middle">G</text>
<g fill="#fff" stroke="#2a2f3a" stroke-width="1.200"><circle cx="404" cy="570" r="2.400"/><circle cx="426.300" cy="567.800" r="2.400"/><circle cx="404" cy="588" r="2.400"/><circle cx="426.300" cy="589.400" r="2.400"/></g></g>
<g id="pb-boolean"><circle cx="83" cy="639.700" r="12.300" fill="none" stroke="#687078" stroke-width="1.150"/><circle cx="90.800" cy="648.200" r="12.300" fill="none" stroke="#687078" stroke-width="1.150"/>
<path d="M94.600 636.400A16.500 16.500 0 0 1 79.200 651.400A16.500 16.500 0 0 1 94.600 636.400Z" fill="#e9c99a" stroke="#d2dfe7" stroke-width="4.200"/>
<path d="M94.600 636.400A16.500 16.500 0 0 1 79.200 651.400A16.500 16.500 0 0 1 94.600 636.400Z" fill="#e9c99a" stroke="#15181c" stroke-width="1.700"/>
<circle cx="95.600" cy="635.100" r="3.700" fill="#d2dfe7"/><circle cx="78.300" cy="652.500" r="3.700" fill="#d2dfe7"/>
<circle cx="95.600" cy="635.100" r="2.800" fill="#e21c1c"/><circle cx="78.300" cy="652.500" r="2.800" fill="#e21c1c"/></g>
<g id="pb-poly"><path d="M142 631.200L165.500 636.400V651.800L142 657.200Z" fill="#dcd5ea" stroke="#44484e" stroke-width="1.600"/><g fill="#9420e4"><circle cx="142" cy="631.200" r="3"/><circle cx="165.500" cy="636.400" r="3"/><circle cx="165.500" cy="651.800" r="3"/><circle cx="142" cy="657.200" r="3"/></g></g>
<g id="pb-group"><rect x="206.800" y="631.800" width="16.800" height="16.400" fill="#e2dab2" stroke="#818890" stroke-width="1.600"/><rect x="214.800" y="640" width="16.800" height="16.400" fill="#e2c2ea" stroke="#818890" stroke-width="1.600"/><rect x="215.600" y="640.800" width="7.200" height="6.600" fill="#e9b6b6"/>
<path d="M214.800 648.200v-8.200h8.800" fill="none" stroke="#818890" stroke-width="1.600"/><path d="M223.600 640v8.200h-8.800" fill="none" stroke="#818890" stroke-width="1.200"/>
<g fill="#175bd3"><circle cx="207.200" cy="632.200" r="3"/><circle cx="231.200" cy="632.200" r="3"/><circle cx="207.200" cy="656.200" r="3"/><circle cx="231.200" cy="656.200" r="3"/></g></g>
<g id="pb-ring"><circle cx="284.300" cy="643.900" r="15" fill="#8fe18f" stroke="#55645c" stroke-width="1.500"/><circle cx="288.200" cy="646.400" r="7.600" fill="#d2dfe7" stroke="#55645c" stroke-width="1.500"/></g>
<g id="pb-head"><path d="M354 627C346 626.500 337.500 630.500 335.800 637.500C335.500 640 336.800 642 337.600 644L335.700 648.700Q335.600 649.700 336.800 649.900L338.600 650.500L338.300 652.400L339.600 653.400L339.300 655.400C340.200 657.500 343 657.100 345 656.500L351 654.700L353.100 659.700L363 656.500C362 653 361 651 361.400 649C364 645 365.200 641 364.500 637C363.500 631 359.500 627.300 354 627Z" fill="#111b29"/>
<path d="M356.04 639.18 L359.37 639.29 L359.37 640.71 L356.04 640.82 L355.69 642.11 L358.52 643.87 L357.82 645.10 L354.88 643.53 L353.93 644.48 L355.50 647.42 L354.27 648.12 L352.51 645.29 L351.22 645.64 L351.11 648.97 L349.69 648.97 L349.58 645.64 L348.29 645.29 L346.53 648.12 L345.30 647.42 L346.87 644.48 L345.92 643.53 L342.98 645.10 L342.28 643.87 L345.11 642.11 L344.76 640.82 L341.43 640.71 L341.43 639.29 L344.76 639.18 L345.11 637.89 L342.28 636.13 L342.98 634.90 L345.92 636.47 L346.87 635.52 L345.30 632.58 L346.53 631.88 L348.29 634.71 L349.58 634.36 L349.69 631.03 L351.11 631.03 L351.22 634.36 L352.51 634.71 L354.27 631.88 L355.50 632.58 L353.93 635.52 L354.88 636.47 L357.82 634.90 L358.52 636.13 L355.69 637.89Z" fill="#f4f6f8"/><circle cx="350.400" cy="640" r="2.300" fill="#111b29"/></g>
<g id="pb-tree"><rect x="402.200" y="629.200" width="29" height="7.600" rx="2" fill="#f6f8fa" stroke="#121a2a" stroke-width="1.900"/><path d="M408.200 637.600v14.400q0 2.400 2.400 2.400h7.600M408.200 644.400h10" fill="none" stroke="#121a2a" stroke-width="1.900"/>
<rect x="418.800" y="641.600" width="12.600" height="5.600" rx="1.800" fill="#e3262c" stroke="#121a2a" stroke-width="1.700"/><rect x="418.800" y="651.600" width="12.600" height="5.600" rx="1.800" fill="#28c43c" stroke="#121a2a" stroke-width="1.700"/></g>
<g id="pp-axis"><path d="M474.200 569.900H504" stroke="#222" stroke-width="1.300"/><path d="M477.0 569.900v-2.700M480.0 569.900v-2.700M483.0 569.900v-2.700M486.0 569.900v-2.700M489.0 569.900v-2.700M492.0 569.900v-2.700M495.0 569.900v-2.700M498.0 569.900v-2.700M501.0 569.900v-2.700" stroke="#222" stroke-width="1.300" fill="none"/><path d="M507.600 569.900l-4.600-3.200v6.400z" fill="#222"/>
<text x="490" y="587" font-family="DejaVu Sans Mono,Liberation Mono,monospace" font-weight="700" font-size="12" text-anchor="middle" fill="#151515" stroke="#f2c46a" stroke-width="1.500" stroke-opacity=".45" paint-order="stroke" style="white-space:pre" transform="translate(490 0) scale(1.160 1) translate(-490 0)">0 1</text></g>
<g id="pp-cbar"><defs><linearGradient id="jet" x1="0" y1="0" x2="0" y2="1"><stop offset="0" stop-color="#e0201c"/><stop offset=".18" stop-color="#f0781c"/><stop offset=".36" stop-color="#ecd422"/><stop offset=".55" stop-color="#5cd040"/><stop offset=".75" stop-color="#24c4c8"/><stop offset="1" stop-color="#2058e0"/></linearGradient></defs>
<rect x="545.600" y="564.400" width="8" height="26" fill="url(#jet)" stroke="#4a4a4a" stroke-width=".8"/><path d="M553.800 566.0h1.1M553.800 568.5h1.8M553.800 570.9h1.1M553.800 573.4h1.8M553.800 575.8h1.1M553.800 578.2h1.8M553.800 580.7h1.1M553.800 583.1h1.8M553.800 585.6h1.1M553.800 588.0h1.8M553.800 590.5h1.1" stroke="#333" stroke-width=".8"/>
<text x="565.800" y="573.200" font-family="DejaVu Sans Mono,Liberation Mono,monospace" font-weight="700" font-size="12" text-anchor="middle" fill="#151515" stroke="#f2c46a" stroke-width="1.500" stroke-opacity=".45" paint-order="stroke" transform="translate(565.800 0) scale(1.160 1) translate(-565.800 0)">1</text>
<text x="565.800" y="590.600" font-family="DejaVu Sans Mono,Liberation Mono,monospace" font-weight="700" font-size="12" text-anchor="middle" fill="#151515" stroke="#f2c46a" stroke-width="1.500" stroke-opacity=".45" paint-order="stroke" transform="translate(565.800 0) scale(1.160 1) translate(-565.800 0)">0</text></g>
<g id="pp-func"><rect x="611.200" y="566.800" width="23.100" height="23.100" fill="#fafafa"/><path d="M611.2 566.800V589.900M614.5 566.800V589.900M617.8 566.800V589.900M621.1 566.800V589.900M624.4 566.800V589.900M627.7 566.800V589.900M631.0 566.800V589.900M634.3 566.800V589.900M611.200 566.8H634.300M611.200 570.1H634.300M611.200 573.4H634.300M611.200 576.7H634.300M611.200 580.0H634.300M611.200 583.3H634.300M611.200 586.6H634.300M611.200 589.9H634.300" stroke="#8e8e8e" stroke-width=".85" fill="none"/>
<path d="M605.600 578H637M622.600 595V564" stroke="#2a2a2a" stroke-width="1" fill="none"/><path d="M640.200 578l-4.200-3v6zM622.600 561.400l-3 4.200h6z" fill="#222"/>
<path d="M613.600 567C616.400 579 619.600 588.200 622.600 588.200S628.800 579 631.800 567" fill="none" stroke="#c42424" stroke-width="1.700"/></g>
<g id="pp-combo"><rect x="679" y="581" width="6" height="9.400" fill="#d8e6f6" stroke="#3a7ad0" stroke-width="1"/><path d="M681 582v8M683 582v8" stroke="#8ab4e4" stroke-width=".6"/>
<rect x="687.400" y="574" width="6" height="16.400" fill="#f8e2b0" stroke="#e0a030" stroke-width="1"/><path d="M689.400 575v15M691.400 575v15" stroke="#ecc070" stroke-width=".6"/>
<rect x="696" y="566.200" width="6" height="24.200" fill="#bfe0b8" stroke="#3c9848" stroke-width="1"/><path d="M698 567v23M700 567v23" stroke="#7cc080" stroke-width=".6"/>
<path d="M677 568.600C680 577 685 580.600 690 577.600S698.600 566 704 567.400" fill="none" stroke="#3468d8" stroke-width="1.200"/>
<path d="M677 584C682 572 689 568.600 695 570.600S701.600 580 704 586" fill="none" stroke="#dc3030" stroke-width="1.200"/>
<path d="M677 589C683 587.600 686 582 691 581.600S698 586.600 704 588.600" fill="none" stroke="#3a9a40" stroke-width="1.100"/>
<path d="M675.800 564.600V591H704.400" fill="none" stroke="#1a1a1a" stroke-width="1.600"/></g>
<g id="pp-pie"><circle cx="491" cy="644.5" r="14.600" fill="#f6f6f6" stroke="#2a2a2a" stroke-width="1.200"/>
<path d="M491 644.5L491.00 632.30A12.2 12.2 0 0 0 480.43 650.60Z" fill="#22a046"/><path d="M491 644.5L491.00 632.30A12.2 12.2 0 0 1 501.57 650.60Z" fill="#5058c8"/><path d="M491 644.5L501.57 650.60A12.2 12.2 0 0 1 480.43 650.60Z" fill="#e04a4a"/>
<path d="M491 644.5L491.00 632.30M491 644.5L501.57 650.60M491 644.5L480.43 650.60" stroke="#f6f6f6" stroke-width="1.300"/></g>
<g id="pp-radar"><circle cx="557.300" cy="644.500" r="14.200" fill="#f3ecee" stroke="#1a1a1a" stroke-width="1.500"/><circle cx="557.300" cy="644.500" r="9.600" fill="#ebe0c6" stroke="#d8cca8" stroke-width=".8"/><circle cx="557.300" cy="644.500" r="5.400" fill="#efe6d2" stroke="#d0c4a0" stroke-width=".8"/>
<path d="M544 644.500H570.600M557.300 631.200V657.800" stroke="#a8a8a8" stroke-width="1.100"/><path d="M557.300 644.500L566.800 636.600" stroke="#e02424" stroke-width="1.500"/><circle cx="557.300" cy="644.500" r="1.900" fill="#111"/></g>
<g id="pp-surf"><defs><linearGradient id="pk" x1="0" y1="0" x2="0" y2="1"><stop offset="0" stop-color="#9a1616"/><stop offset=".22" stop-color="#f0541a"/><stop offset=".48" stop-color="#f0a422"/><stop offset=".74" stop-color="#e6d62a"/><stop offset="1" stop-color="#94d444"/></linearGradient><linearGradient id="pk2" x1="0" y1="0" x2="0" y2="1"><stop offset="0" stop-color="#f0b020"/><stop offset=".6" stop-color="#e2d42c"/><stop offset="1" stop-color="#8ed04a"/></linearGradient><linearGradient id="dp" x1="0" y1="0" x2="0" y2="1"><stop offset="0" stop-color="#3ccab4"/><stop offset=".45" stop-color="#28a4d8"/><stop offset="1" stop-color="#1632cc"/></linearGradient></defs>
<path d="M603.700 647.400L618.900 637.100 641.100 643.700 626.900 656Z" fill="#49a95f"/>
<path d="M613.600 647.400Q618.600 645.200 624.400 648.200L622.800 652.600 619.700 659.500 616.200 652.800Z" fill="url(#dp)"/>
<path d="M619.400 640.300L623.800 645.800Q619.200 647.800 614.800 645.800Z" fill="url(#pk2)"/>
<path d="M626.600 629.300C628.500 631.800 631 640.800 633 646.400Q627.200 649.200 621.600 646.800C623.400 640.800 624.800 631.800 626.600 629.300Z" fill="url(#pk)"/>
<path d="M627.600 642.200L630.600 647.200Q627.400 648.400 624.600 647.200Z" fill="#e8cc28" opacity=".9"/><path d="M626.600 629.300L625.600 647.400M626.600 629.300L629.400 647" stroke="#a84a18" stroke-width=".4" opacity=".6" fill="none"/></g>
<path id="pp-helix" d="M702.1 633.9 700.9 635.2 699.4 636.4 697.6 637.5 695.6 638.4 693.4 639.2 691.1 639.8 688.7 640.2 686.3 640.4 684.0 640.5 681.8 640.3 679.8 640.0 678.0 639.6 676.5 639.0 675.3 638.3 674.4 637.5 673.9 636.7 673.8 635.8 674.1 635.0 674.7 634.2 675.7 633.4 677.0 632.8 678.6 632.2 680.5 631.8 682.6 631.6 684.8 631.5 687.2 631.6 689.6 631.9 691.9 632.4 694.2 633.0 696.3 633.8 698.3 634.8 700.0 636.0 701.4 637.2 702.5 638.6 703.2 640.0 703.6 641.5 703.5 642.9 703.1 644.4 702.4 645.8 701.3 647.2 699.8 648.4 698.1 649.5 696.2 650.5 694.0 651.3 691.7 652.0 689.4 652.4 687.0 652.7 684.6 652.8 682.4 652.7 680.3 652.4 678.5 652.0 676.9 651.5 675.6 650.8 674.6 650.0 674.0 649.2 673.8 648.4 674.0 647.5 674.5 646.7 675.4 645.9 676.6 645.3 678.2 644.7 680.0 644.2 682.0 643.9 684.2 643.8 686.5 643.9 688.9 644.1 691.3 644.5 693.6 645.1 695.8 645.9 697.8 646.9 699.5 648.0 701.0 649.2 702.2 650.5 703.0 651.9 703.5 653.4 703.6 654.9 703.3 656.3 702.6 657.8 701.6 659.1" fill="none" stroke="#dc3c3c" stroke-width="1.100" stroke-linecap="round" stroke-linejoin="round"/>
<g id="pg-icons"><clipPath id="cpg"><rect x="731" y="543" width="33" height="134"/></clipPath>
<g clip-path="url(#cpg)"><circle cx="753" cy="565.300" r="3.300" fill="#4a4a4a"/>
<text x="740.600" y="621.400" font-family="Liberation Serif,serif" font-size="33.500" fill="#2a2a2a" transform="translate(741 0) scale(1.300 1) translate(-741 0)">T</text>
<text x="741.200" y="661.600" font-family="Liberation Serif,serif" font-style="italic" font-size="23.500" fill="#111" stroke="#111" stroke-width=".3">L</text></g>
<rect x="751" y="542" width="13" height="136" fill="url(#gfade)"/>
<defs><linearGradient id="gfade" x1="0" y1="0" x2="1" y2="0"><stop offset="0" stop-color="#f0f0f0" stop-opacity="0"/><stop offset=".7" stop-color="#f0f0f0"/><stop offset="1" stop-color="#f0f0f0"/></linearGradient></defs></g>

<g id="r-layers"><path d="M793.300 92.300l3.200-1.500 8.300 4.100 8.300-4.100 3.200 1.500-11.500 5.900z" fill="#2676c4"/><path d="M793.300 88.300l3.200-1.500 8.300 4.100 8.300-4.100 3.200 1.500-11.500 5.900z" fill="#1fa83a" stroke="#f6f6f6" stroke-width=".9"/><path d="M793.300 84l11.500-5.500 11.500 5.500-11.500 5.700z" fill="#d4201e" stroke="#f6f6f6" stroke-width=".9"/><circle cx="803.600" cy="83.200" r=".45" fill="#f08080"/><circle cx="806" cy="83.200" r=".45" fill="#f08080"/></g>
<g id="r-palette"><path d="M877.400 78.800c-5 .2-8.400 5.400-8.200 11 .2 4.800 3.200 7.600 7.600 7.400 4.800-.2 8.400-3.400 8.600-6.800.1-2-1.200-2.400-2.600-2.200-1.800.3-2.800-.8-1.800-2.800 1.600-3.200.4-6.700-3.600-6.600z" fill="#fdfdfd" stroke="#111" stroke-width="1.300"/><circle cx="878.800" cy="83" r="1.250" fill="#e02020"/><circle cx="874.600" cy="86.200" r="1.250" fill="#20a030"/><circle cx="873" cy="91" r="1.250" fill="#8a2be2"/><circle cx="876.400" cy="94.400" r="1.150" fill="#f09020"/>
<path d="M889 79.200c1.600 2 2.400 3.800 2.200 5.600q-.4 1.800-2.200 1.800t-2.200-1.800c-.2-1.800.6-3.600 2.200-5.600z" fill="#143a62"/><path d="M888 86.600h2l-.3 11.200q-.7.800-1.400 0z" fill="#143a62"/><path d="M888.400 82.400l.6-1.600" stroke="#7ab0e0" stroke-width=".7"/></g>
<g id="r-camera" fill="none" stroke="#3f2a92" stroke-width="1.250"><circle cx="951.200" cy="83.300" r="3.500"/><circle cx="951.200" cy="83.300" r="1.500"/><circle cx="959.800" cy="83.300" r="3.500"/><circle cx="959.800" cy="83.300" r="1.500"/><rect x="947.800" y="88.100" width="14.800" height="9.400" rx="1"/><path d="M962.600 91l5.800-2.400v8.200l-5.800-2.400z"/><path d="M966.400 90v5.600"/></g>
<g id="r-addlayer"><g fill="#f4f4f4" stroke="#111" stroke-width="1.100"><ellipse cx="801.600" cy="126.200" rx="6.800" ry="1.900"/><ellipse cx="801.600" cy="123.400" rx="6.800" ry="1.900"/><ellipse cx="801.600" cy="120.600" rx="6.800" ry="1.900"/></g><path d="M810.600 126h8.400M814.800 121.800v8.400" stroke="#d8e428" stroke-width="3.600"/><path d="M811.200 126h7.200M814.800 122.400v7.200" stroke="#2fae34" stroke-width="2.200"/></g>
<g id="r-anchor1" fill="none" stroke="#e0201e" stroke-width="1.45" stroke-linejoin="round"><circle cx="841.8" cy="120.0" r="1.700"/><path d="M841.8 121.7V130.1M840.1 124.5H843.5"/><path d="M836.5 125.1L841.8 130.3L847.1 125.1" stroke-width="1.81"/><path d="M834.9 123.4L838.3 124.8L835.7 127.1ZM848.7 123.4L845.3 124.8L847.9 127.1Z" fill="#e0201e" stroke-width=".4"/></g>
<g id="r-anchor2" fill="none" stroke="#cbcbcb" stroke-width="1.05" stroke-linejoin="round"><circle cx="879.9" cy="120.0" r="1.700"/><path d="M879.9 121.7V130.1M878.2 124.5H881.6"/><path d="M874.6 125.1L879.9 130.3L885.2 125.1" stroke-width="1.31"/><path d="M873.0 123.4L876.4 124.8L873.8 127.1ZM886.8 123.4L883.4 124.8L886.0 127.1Z" fill="#cbcbcb" stroke-width=".4"/></g>
<g id="r-anchor3" fill="none" stroke="#d4d4c8" stroke-width="1.05" stroke-linejoin="round"><circle cx="928.3" cy="171.0" r="1.700"/><path d="M928.3 172.7V181.1M926.6 175.5H930.0"/><path d="M923.0 176.1L928.3 181.3L933.6 176.1" stroke-width="1.31"/><path d="M921.4 174.4L924.8 175.8L922.2 178.1ZM935.2 174.4L931.8 175.8L934.4 178.1Z" fill="#d4d4c8" stroke-width=".4"/></g>
<g id="r-eye1"><path d="M906.0 128.5C910.0 121.5 919.0 119.7 926.0 124.1C922.0 128.9 913.0 130.1 906.0 128.5Z" fill="#f6f0ea"/><circle cx="916.3" cy="125.3" r="4.400" fill="#5a2412"/><circle cx="916.3" cy="125.3" r="1.900" fill="#1a0a06"/><circle cx="917.6" cy="123.9" r=".9" fill="#fff" opacity=".9"/><path d="M905.0 129.5C908.0 122.7 914.0 119.1 921.0 120.3C925.0 121.1 928.0 122.5 932.0 121.9C928.0 123.9 925.0 122.9 920.6 121.7C914.0 120.7 909.0 124.3 905.0 129.5Z" fill="#0c0c0c"/><path d="M914.0 119.7l-.8-1.800M917.0 119.3l-.2-1.900M920.0 119.7l.6-1.900M923.0 120.5l1.400-1.800M926.0 121.5l1.800-1.600M928.6 122.1l2-1.200" stroke="#333" stroke-width=".6" fill="none"/><path d="M908.0 129.3C914.0 130.5 921.0 128.9 925.6 124.7" stroke="#c8a890" stroke-width=".6" fill="none"/></g>
<g id="r-eye2"><path d="M943.5 128.5C947.5 121.5 956.5 119.7 963.5 124.1C959.5 128.9 950.5 130.1 943.5 128.5Z" fill="#ececec"/><circle cx="953.8" cy="125.3" r="4.400" fill="#c4c4c4"/><circle cx="953.8" cy="125.3" r="1.900" fill="#b0b0b0"/><circle cx="955.1" cy="123.9" r=".9" fill="#fff" opacity=".9"/><path d="M942.5 129.5C945.5 122.7 951.5 119.1 958.5 120.3C962.5 121.1 965.5 122.5 969.5 121.9C965.5 123.9 962.5 122.9 958.1 121.7C951.5 120.7 946.5 124.3 942.5 129.5Z" fill="#b8b8b8"/><path d="M951.5 119.7l-.8-1.800M954.5 119.3l-.2-1.900M957.5 119.7l.6-1.900M960.5 120.5l1.400-1.800M963.5 121.5l1.800-1.600M966.1 122.1l2-1.200" stroke="#c8c8c8" stroke-width=".6" fill="none"/><path d="M945.5 129.3C951.5 130.5 958.5 128.9 963.1 124.7" stroke="#d8d8d8" stroke-width=".6" fill="none"/></g>
<g id="r-eye3"><path d="M946.0 180.4C950.0 173.4 959.0 171.6 966.0 176.0C962.0 180.8 953.0 182.0 946.0 180.4Z" fill="#f6f0ea"/><circle cx="956.3" cy="177.2" r="4.400" fill="#5a2412"/><circle cx="956.3" cy="177.2" r="1.900" fill="#1a0a06"/><circle cx="957.6" cy="175.8" r=".9" fill="#fff" opacity=".9"/><path d="M945.0 181.4C948.0 174.6 954.0 171.0 961.0 172.2C965.0 173.0 968.0 174.4 972.0 173.8C968.0 175.8 965.0 174.8 960.6 173.6C954.0 172.6 949.0 176.2 945.0 181.4Z" fill="#0c0c0c"/><path d="M954.0 171.6l-.8-1.800M957.0 171.2l-.2-1.900M960.0 171.6l.6-1.900M963.0 172.4l1.400-1.800M966.0 173.4l1.800-1.600M968.6 174.0l2-1.200" stroke="#333" stroke-width=".6" fill="none"/><path d="M948.0 181.2C954.0 182.4 961.0 180.8 965.6 176.6" stroke="#c8a890" stroke-width=".6" fill="none"/></g>
<g id="r-thumb"><path d="M780.200 157.200A11.300 3.500 0 0 1 802.800 157.200V173A11.300 3.600 0 0 1 780.200 173Z" fill="#b3b6e6"/><ellipse cx="791.500" cy="173" rx="11.300" ry="3.600" fill="#8a8fda"/><path d="M787.200 157.400h8.600V173h-8.600z" fill="#8a8fda"/><ellipse cx="791.500" cy="157.300" rx="4.300" ry="1.500" fill="#b9bceb"/>
<path d="M787.200 160V173M795.800 160V173" stroke="#2a2a4a" stroke-width="1" stroke-dasharray="1.200 1.600"/><ellipse cx="791.500" cy="172.600" rx="4.300" ry="1.400" fill="none" stroke="#2a2a4a" stroke-width="1" stroke-dasharray="1.200 1.400"/><path d="M781 171.800q10.500-5 21 0" fill="none" stroke="#2a2a4a" stroke-width=".9" stroke-dasharray="1.200 1.600"/>
<path d="M780.200 157.200V173A11.300 3.600 0 0 0 802.800 173V157.200" fill="none" stroke="#2a3042" stroke-width="1.300"/><ellipse cx="791.500" cy="157.200" rx="11.300" ry="3.500" fill="none" stroke="#2a3042" stroke-width="1.300"/><ellipse cx="791.500" cy="157.300" rx="4.300" ry="1.500" fill="none" stroke="#2a3042" stroke-width="1.100"/></g>
<path id="r-sbup" d="M982.800 154.600h8l-4-5z" fill="#a3a3a3"/><path id="r-sbdn" d="M982.800 673.600h8l-4 5z" fill="#8e8e8e"/>
</svg>
</body>
</html>
